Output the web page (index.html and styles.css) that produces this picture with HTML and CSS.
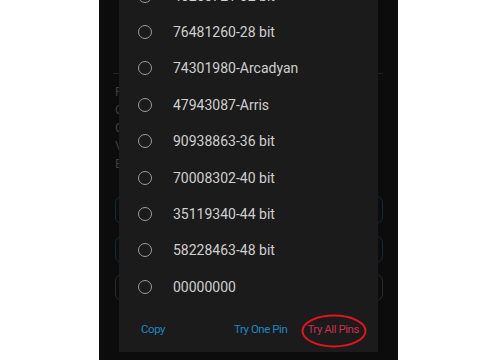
FILE: index.html
```html
<!DOCTYPE html>
<html lang="en">
<head>
  <meta charset="UTF-8">
  <meta name="viewport" content="width=device-width, initial-scale=1.0">
  <title>WPS Pins</title>
  <link rel="stylesheet" href="styles.css">
</head>
<body>
  <div class="phone">
    <div class="backdrop">
      <div class="divider"></div>
      <div class="info">
        <p>F</p>
        <p>C</p>
        <p>C</p>
        <p>V</p>
        <p>E</p>
      </div>
      <div class="field field-blue"></div>
      <div class="field field-blue second"></div>
      <div class="field field-gray"></div>
    </div>

    <div class="dialog">
      <ul class="pins">
        <li><span class="radio"></span>46253721-32 bit</li>
        <li><span class="radio"></span>76481260-28 bit</li>
        <li><span class="radio"></span>74301980-Arcadyan</li>
        <li><span class="radio"></span>47943087-Arris</li>
        <li><span class="radio"></span>90938863-36 bit</li>
        <li><span class="radio"></span>70008302-40 bit</li>
        <li><span class="radio"></span>35119340-44 bit</li>
        <li><span class="radio"></span>58228463-48 bit</li>
        <li><span class="radio"></span>00000000</li>
      </ul>
      <div class="actions">
        <button class="btn">Copy</button>
        <button class="btn push">Try One Pin</button>
        <button class="btn danger">Try All Pins</button>
      </div>
      <svg class="circled" width="66" height="34" viewBox="0 0 66 34">
        <ellipse cx="33" cy="17" rx="31.5" ry="15.5" fill="none" stroke="#e3141c" stroke-width="2"/>
      </svg>
    </div>
  </div>
</body>
</html>
```

FILE: styles.css
```css
body {
  margin: 0;
  background: #ffffff;
  font-family: Roboto, "Noto Sans", sans-serif;
}
.phone {
  position: relative;
  margin-left: 99px;
  width: 299px;
  height: 360px;
  background: #0c0c0c;
  overflow: hidden;
}
.backdrop {
  padding: 73px 15px 0 14px;
}
.divider {
  height: 1px;
  background: #222222;
}
.info {
  padding: 9px 0 0 2px;
}
.info p {
  margin: 0;
  height: 18px;
  line-height: 18px;
  font-size: 13px;
  color: #3e3e3e;
}
.field {
  margin: 0 0 0 2px;
  border-radius: 7px;
  border: 1px solid #0f2c3d;
  height: 26px;
}
.info + .field {
  margin-top: 23px;
}
.field.second {
  margin-top: 12px;
  height: 25px;
}
.field-gray {
  margin-top: 11px;
  height: 25px;
  border-color: #2a2a2a;
}
.dialog {
  position: absolute;
  left: 20px;
  bottom: 8px;
  width: 259px;
  background: #1b1b1b;
}
.pins {
  list-style: none;
  margin: 0;
  padding: 0;
}
.pins li {
  display: flex;
  align-items: center;
  height: 36.4px;
  padding-left: 19px;
  font-size: 14px;
  color: #cfcfcf;
}
.radio {
  width: 12px;
  height: 12px;
  border: 1.7px solid #9c9c9c;
  border-radius: 50%;
  margin-right: 21px;
  flex-shrink: 0;
}
.actions {
  display: flex;
  align-items: center;
  height: 47px;
  padding: 1px 19px 0 22px;
  box-sizing: border-box;
}
.btn {
  background: none;
  border: none;
  padding: 0;
  font-family: Roboto, "Noto Sans", sans-serif;
  font-size: 11.5px;
  letter-spacing: -0.45px;
  color: #1b88c2;
  cursor: pointer;
}
.push {
  margin-left: auto;
}
.danger {
  margin-left: 20px;
  color: #c6304f;
}
.circled {
  position: absolute;
  right: 11px;
  bottom: 4px;
}
```
